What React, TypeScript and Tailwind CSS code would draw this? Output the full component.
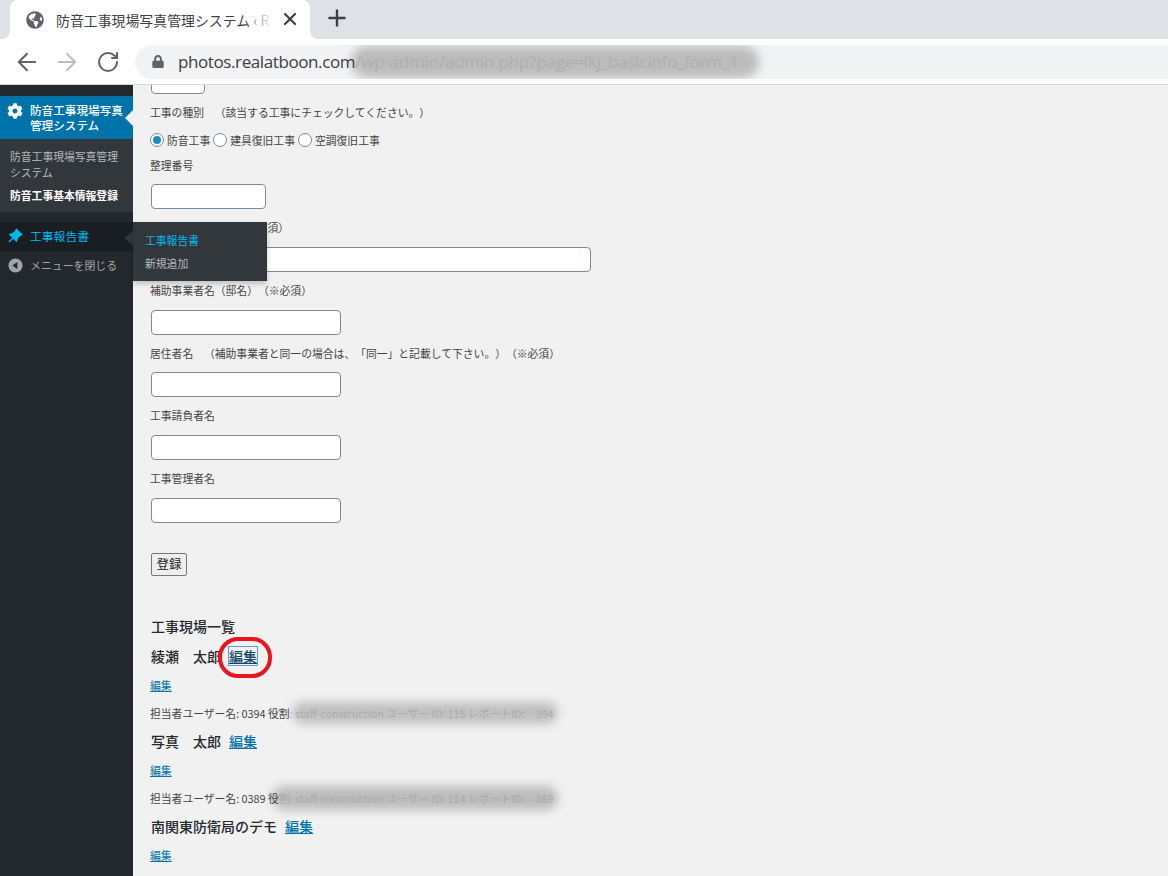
import { ArrowLeft, ArrowRight, Plus, RotateCw, X } from 'lucide-react';
import { FaCog, FaGlobeAmericas, FaLock } from 'react-icons/fa';
import { RiPushpinFill } from 'react-icons/ri';

const FONT = 'font-["Noto_Sans_CJK_JP","Noto_Sans",sans-serif] [text-spacing-trim:space-all]';

function TextBox({ width }: { width: string }) {
  return <input type="text" className={`block h-[25px] ${width} rounded-[4px] border border-[#7e8993] bg-white`} />;
}

function Label({ children, className }: { children: React.ReactNode; className: string }) {
  return <p className={`-ml-px h-4 whitespace-pre text-[10.8px] leading-[14px] text-[#444] ${className}`}>{children}</p>;
}

function Radio({ checked }: { checked?: boolean }) {
  return (
    <span className="flex h-[14px] w-[14px] shrink-0 items-center justify-center rounded-full border border-[#7e8993] bg-white">
      {checked && <span className="h-[8px] w-[8px] rounded-full bg-[#1e8cbe]" />}
    </span>
  );
}

function SmallLink({ className }: { className: string }) {
  return (
    <p className={`-ml-px h-4 text-[10.8px] leading-[14px] ${className}`}>
      <a className="text-[#0073aa] underline">編集</a>
    </p>
  );
}

function BrowserChrome() {
  return (
    <div className="relative h-[85px] shrink-0 border-b border-[#d6d8dc] bg-white">
      <div className="flex h-[39px] bg-[#dee1e6] pl-[10px]">
        <div className="relative flex h-[39px] w-[300px] items-center rounded-t-[8px] bg-white pl-[16px]">
          <span className="absolute bottom-0 left-[-8px] h-2 w-2 bg-white">
            <span className="block h-2 w-2 rounded-br-[8px] bg-[#dee1e6]" />
          </span>
          <span className="absolute bottom-0 right-[-8px] h-2 w-2 bg-white">
            <span className="block h-2 w-2 rounded-bl-[8px] bg-[#dee1e6]" />
          </span>
          <FaGlobeAmericas className="h-[18px] w-[18px] shrink-0 text-[#5f6368]" />
          <div className="relative ml-[12px] w-[217px] whitespace-nowrap text-[13.9px] leading-5 text-[#3c4043]">
            防音工事現場写真管理システム ‹ R
            <span className="absolute inset-y-0 right-0 w-[30px] bg-gradient-to-r from-white/0 to-white" />
          </div>
          <X className="absolute left-[270px] top-[9px] h-[20px] w-[20px] text-[#3c4043]" strokeWidth={2.6} />
        </div>
        <Plus className="ml-[14px] mt-[5px] h-[26px] w-[26px] text-[#3c4043]" strokeWidth={2.2} />
      </div>
      <div className="flex h-[45px] items-center">
        <ArrowLeft className="ml-[13px] h-[28px] w-[28px] text-[#5f6368]" strokeWidth={1.8} />
        <ArrowRight className="ml-[12px] h-[28px] w-[28px] text-[#bcbec2]" strokeWidth={1.8} />
        <RotateCw className="ml-[15px] h-[24px] w-[24px] text-[#5f6368]" strokeWidth={2} />
        <div className="relative ml-[15px] flex h-[34px] flex-1 items-center overflow-hidden rounded-l-full bg-[#f1f3f4] pl-[17px]">
          <FaLock className="h-[13px] w-[12px] text-[#5f6368]" />
          <span className="absolute left-[216px] top-[1px] h-[32px] w-[408px] rounded-full bg-[#bcbcbc] blur-[5px]" />
          <span className={`relative ml-[14px] whitespace-nowrap text-[17px] leading-6 tracking-[-0.4px] text-[#3c4043] font-["Open_Sans",sans-serif]`}>
            photos.realatboon.com<span className="tracking-[-0.2px] text-[#b0b0b0]">/wp-admin/admin.php?page=lkj_basicinfo_form_1</span>
          </span>
        </div>
      </div>
    </div>
  );
}

function Sidebar() {
  return (
    <aside className="relative w-[133px] shrink-0 bg-[#23282d] pt-[11px]">
      <div className="relative flex h-[43px] bg-[#0073aa] pl-[7px] pt-[7px] text-[11.6px] font-medium leading-[15px] text-white">
        <FaCog className="mr-[7px] h-[16px] w-[16px] shrink-0" />
        <span className="w-[96px]">防音工事現場写真管理システム</span>
        <span className="absolute right-0 top-[14px] border-y-[8px] border-r-[8px] border-y-transparent border-r-[#f1f1f1]" />
      </div>
      <div className="h-[73px] bg-[#32373c] pl-[10px] pt-[10px] text-[10.8px] leading-[15.5px]">
        <p className="w-[115px] text-[#b4b9be]">防音工事現場写真管理システム</p>
        <p className="mt-[8px] font-bold text-white">防音工事基本情報登録</p>
      </div>
      <div className="mt-[10px] flex h-[29px] items-center bg-[#191e23] pb-[1px] pl-[6px] text-[11.8px] text-[#00b9eb]">
        <RiPushpinFill className="mr-[6px] h-[18px] w-[18px] shrink-0" />
        <span>工事報告書</span>
        <span className="absolute right-0 top-[145px] border-y-[8px] border-r-[8px] border-y-transparent border-r-[#32373c]" />
      </div>
      <div className="flex h-[30px] items-center pb-[1px] pl-[8px] text-[10.9px] text-[#a0a5aa]">
        <svg viewBox="0 0 16 16" className="mr-[7px] h-[15px] w-[15px] shrink-0">
          <circle cx="8" cy="8" r="7.5" fill="#a0a5aa" />
          <path d="M10 4.2v7.6L4.6 8z" fill="#23282d" />
        </svg>
        <span>メニューを閉じる</span>
      </div>
      <div className="absolute left-[133px] top-[137px] z-10 h-[59px] w-[134px] bg-[#32373c] pl-[12px] pt-[10px] text-[10.8px] leading-4 shadow-[0_3px_5px_rgba(0,0,0,0.2)]">
        <p className="text-[#00b9eb]">工事報告書</p>
        <p className="mt-[7px] text-[#b4b9be]">新規追加</p>
      </div>
    </aside>
  );
}

export default function App() {
  return (
    <div className={`flex h-[876px] w-[1168px] flex-col overflow-hidden bg-[#f1f1f1] ${FONT}`}>
      <BrowserChrome />
      <div className="flex min-h-0 flex-1">
        <Sidebar />
        <main className="relative min-w-0 flex-1 overflow-hidden pl-[18px]">
          <div className="-mt-[16px]"><TextBox width="w-[54px]" /></div>
          <Label className="mt-[11px]">工事の種別　（該当する工事にチェックしてください。）</Label>

          <div className="-ml-px mt-[11px] flex h-4 items-center text-[10.8px] leading-4 text-[#444]">
            <Radio checked /><span className="ml-[3px] mr-[3px]">防音工事</span>
            <Radio /><span className="ml-[3px] mr-[3px]">建具復旧工事</span>
            <Radio /><span className="ml-[3px]">空調復旧工事</span>
          </div>

          <Label className="mt-[10px]">整理番号</Label>
          <div className="mt-[10px]"><TextBox width="w-[115px]" /></div>
          <Label className="mt-[11px] pl-[85px]">（※必須）</Label>
          <div className="mt-[11px]"><TextBox width="w-[440px]" /></div>
          <Label className="mt-[11px]">補助事業者名（邸名）（※必須）</Label>
          <div className="mt-[11px]"><TextBox width="w-[190px]" /></div>
          <Label className="mt-[11px]">居住者名　（補助事業者と同一の場合は、「同一」と記載して下さい。）（※必須）</Label>
          <div className="mt-[10px]"><TextBox width="w-[190px]" /></div>
          <Label className="mt-[11px]">工事請負者名</Label>
          <div className="mt-[11px]"><TextBox width="w-[190px]" /></div>
          <Label className="mt-[11px]">工事管理者名</Label>
          <div className="mt-[11px]"><TextBox width="w-[190px]" /></div>

          <button className="mt-[30px] block h-[23px] w-[36px] rounded-[2px] border border-[#767676] bg-[#efefef] text-[12.5px] leading-none text-[#222]">登録</button>

          <h2 className="mt-[41px] h-5 text-[14px] font-medium leading-[18px] text-[#23282d]">工事現場一覧</h2>

          <div className="relative mt-[10px] flex h-5 items-start text-[14px] font-medium leading-[18px] text-[#23282d]">
            <span>綾瀬　太郎</span>
            <a className="ml-[8px] text-[#124964] underline outline-1 outline-[#5b9dd9]">編集</a>
            <span className="absolute left-[67px] top-[-10px] h-[41px] w-[54px] rounded-[20px] border-[4px] border-[#e8141e]" />
          </div>
          <SmallLink className="mt-[11px]" />
          <div className="relative -ml-px mt-[11px] h-4 whitespace-nowrap text-[10.8px] leading-4 text-[#444]">
            <span className="absolute left-[142px] top-[-3px] h-[22px] w-[266px] rounded-full bg-[#c0c0c0] blur-[5px]" />
            <span className="relative">担当者ユーザー名: 0394 役割<span className="text-[#ababab]">: staff-construction ユーザー ID: 115 レポートID:　394</span></span>
          </div>

          <div className="mt-[11px] flex h-5 items-start text-[14px] font-medium leading-[18px] text-[#23282d]">
            <span>写真　太郎</span>
            <a className="ml-[8px] text-[#0073aa] underline">編集</a>
          </div>
          <SmallLink className="mt-[11px]" />
          <div className="relative -ml-px mt-[11px] h-4 whitespace-nowrap text-[10.8px] leading-4 text-[#444]">
            <span className="absolute left-[122px] top-[-4px] h-[24px] w-[286px] rounded-full bg-[#bcbcbc] blur-[5px]" />
            <span className="relative">担当者ユーザー名: 0389 役<span className="text-[#ababab]">割: staff-construction ユーザー ID: 114 レポートID:　389</span></span>
          </div>

          <div className="mt-[11px] flex h-5 items-start text-[14px] font-medium leading-[18px] text-[#23282d]">
            <span>南関東防衛局のデモ</span>
            <a className="ml-[8px] text-[#0073aa] underline">編集</a>
          </div>
          <SmallLink className="mt-[11px]" />
        </main>
      </div>
    </div>
  );
}
